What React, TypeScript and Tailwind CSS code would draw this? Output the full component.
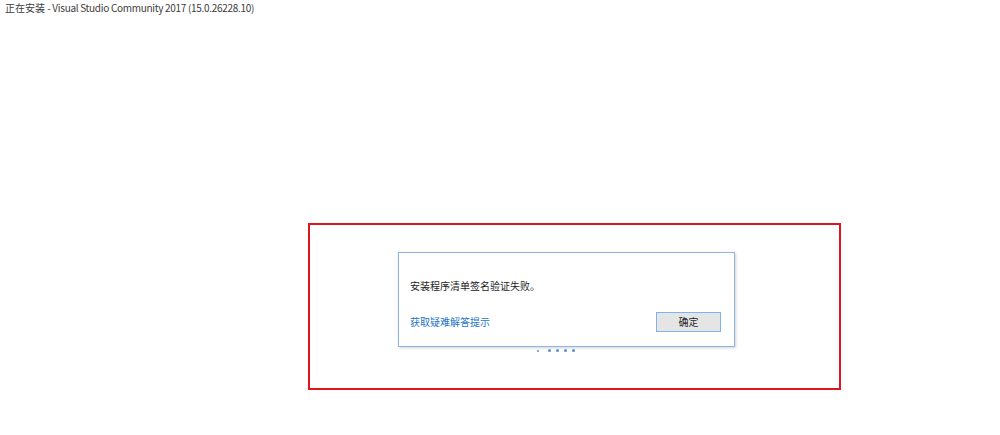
import React from "react";

const font = { fontFamily: '"Noto Sans CJK SC", "Noto Sans", sans-serif' };

// ── Error dialog ─────────────────────────────────────────
function ErrorDialog() {
  return (
    <div className="w-[337px] h-[95px] border border-[#8db5e2] bg-white shadow-[1px_1px_3px_rgba(0,0,0,0.18)] flex flex-col pl-[11px] pr-[13px]">
      <div className="pt-[25px] text-[10px] leading-[16px] text-[#1e1e1e]">安装程序清单签名验证失败。</div>
      <div className="mt-[18px] flex items-center justify-between">
        <a className="text-[10px] leading-[16px] text-[#2474c8] cursor-pointer">获取疑难解答提示</a>
        <button className="w-[65px] h-[20px] border border-[#7eb4ea] bg-[#e5e5e5] text-[10px] leading-none text-[#1e1e1e]">
          确定
        </button>
      </div>
    </div>
  );
}

function Dots() {
  return (
    <div className="flex gap-[5px] items-center pl-[139px] mt-[2px]">
      <span className="w-[2px] h-[2px] rounded-full bg-[#5b8fd6] mr-[4px]" />
      <span className="w-[3px] h-[3px] rounded-full bg-[#5b8fd6]" />
      <span className="w-[3px] h-[3px] rounded-full bg-[#5b8fd6]" />
      <span className="w-[3px] h-[3px] rounded-full bg-[#5b8fd6]" />
      <span className="w-[3px] h-[3px] rounded-full bg-[#5b8fd6]" />
    </div>
  );
}

export default function App() {
  return (
    <div className="w-[1000px] h-[435px] bg-white overflow-hidden" style={font}>
      <div className="pl-[5px] pt-[1px] h-[14px] text-[10px] leading-[14px] text-[#3c3c3c] whitespace-nowrap">
        正在安装 <span className="tracking-[-0.3px]">- Visual Studio Community 2017 (15.0.26228.10)</span>
      </div>
      <div className="ml-[308px] mt-[209px] w-[533px] h-[167px] border-2 border-[#e0141c] pl-[88px] pt-[27px]">
        <ErrorDialog />
        <Dots />
      </div>
    </div>
  );
}
